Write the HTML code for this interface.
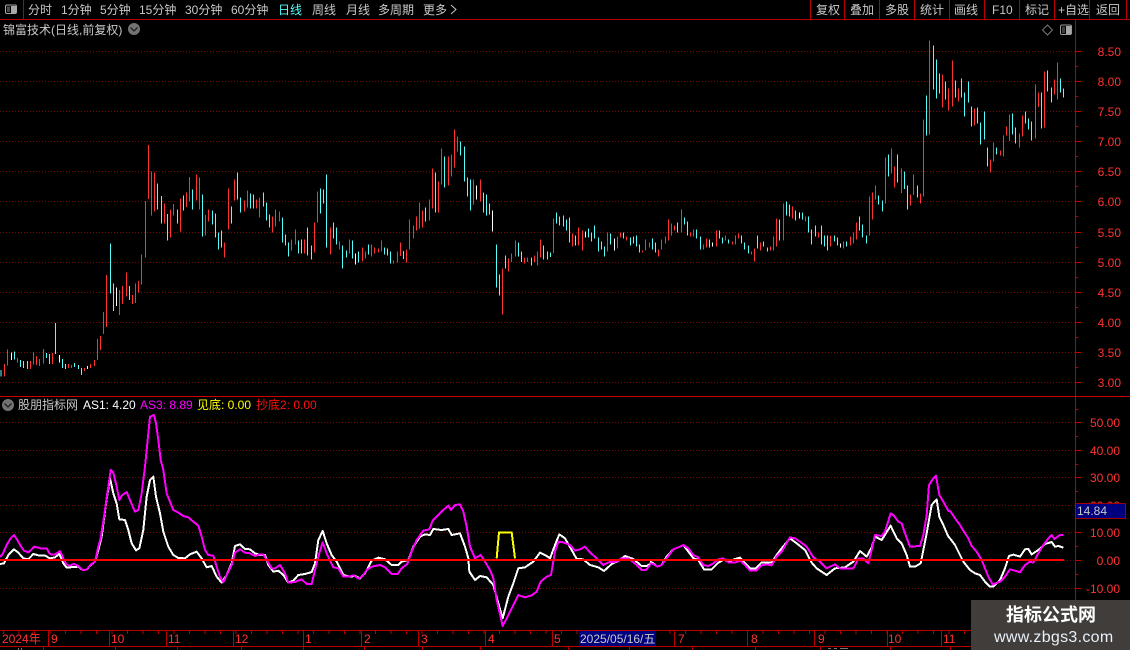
<!DOCTYPE html>
<html><head><meta charset="utf-8"><style>
html,body{margin:0;padding:0;background:#000;width:1130px;height:650px;overflow:hidden}
svg{display:block;position:absolute;left:0;top:0}
text{font-family:"Liberation Sans","WenQuanYi Zen Hei","Noto Sans CJK SC",sans-serif;font-size:12px}
.t text{fill:#c8c8c8}
.a text{fill:#ff3232;text-anchor:end}
.b text{fill:#ff3232}
.r{stroke:#ff3232}.c{stroke:#54fcfc}.w{stroke:#fff}
.bars path{stroke-width:3;fill:none;shape-rendering:crispEdges}
.ln polyline{fill:none;stroke-width:6;shape-rendering:crispEdges;stroke-linejoin:round}
</style></head><body>
<svg width="1130" height="650" viewBox="0 0 1130 650" xmlns="http://www.w3.org/2000/svg">
<rect width="1130" height="650" fill="#000"/>
<!-- grid -->
<g stroke="#780808" stroke-width="1" stroke-dasharray="1 2" shape-rendering="crispEdges">
<path d="M0 51.5H1075M0 81.5H1075M0 111.5H1075M0 141.5H1075M0 171.5H1075M0 201.5H1075M0 232.5H1075M0 262.5H1075M0 292.5H1075M0 322.5H1075M0 352.5H1075M0 382.5H1075"/>
<path d="M0 422.5H1075M0 450.5H1075M0 477.5H1075M0 505.5H1075M0 532.5H1075M1064 560.5H1075M0 588.5H1075"/>
</g>
<!-- frame lines -->
<g stroke="#b80000" stroke-width="1" shape-rendering="crispEdges" fill="none">
<path d="M0 19.5H1130M23.5 0V19M810.5 0V19M844.5 0V19M879.5 0V19M914.5 0V19M949.5 0V19M984.5 0V19M1019.5 0V19M1054.5 0V19M1089.5 0V19M1126.5 0V19"/>
<path d="M1075.5 19V630"/>
<path d="M1075 51.5h6M1075 66.5h3M1075 81.5h6M1075 96.5h3M1075 111.5h6M1075 126.5h3M1075 141.5h6M1075 156.5h3M1075 171.5h6M1075 186.5h3M1075 201.5h6M1075 216.5h3M1075 232.5h6M1075 247.5h3M1075 262.5h6M1075 277.5h3M1075 292.5h6M1075 307.5h3M1075 322.5h6M1075 337.5h3M1075 352.5h6M1075 367.5h3M1075 382.5h6"/>
<path d="M1075 422.5h6M1075 436.5h3M1075 450.5h6M1075 464.5h3M1075 477.5h6M1075 491.5h3M1075 532.5h6M1075 546.5h3M1075 560.5h6M1075 574.5h3M1075 588.5h6M1075 602.5h3M1075 616.5h3M1075 409.5h3"/>
<path d="M0 396.5H1130" stroke="#d00000"/>
<path d="M0 630.5H1130M0 646.5H1130"/>
<path d="M48.5 630V646M109.5 630V646M166.5 630V646M233.5 630V646M303.5 630V646M361.5 630V646M418.5 630V646M485.5 630V646M552.5 630V646M674.5 630V646M747.5 630V646M814.5 630V646M887.5 630V646M941.5 630V646"/>
<path d="M3 632.5H971" stroke-width="3" stroke-dasharray="1 14.5"/>
<path d="M43.5 646V650M115.5 646V650M177.5 646V650M241.5 646V650M303.5 646V650M364.5 646V650M422.5 646V650M480.5 646V650M568.5 646V650M629.5 646V650M692.5 646V650M755.5 646V650M820.5 646V650M890.5 646V650M950.5 646V650"/>
</g>
<!-- top-left icon -->
<rect x="5.5" y="5" width="11" height="8.5" rx="1.5" fill="none" stroke="#a8a8a8"/>
<rect x="11" y="6" width="5" height="7" fill="#a8a8a8"/>
<rect x="7" y="6.5" width="3" height="5.5" fill="#4a4a4a"/>
<!-- toolbar text -->
<g class="t">
<text x="28" y="14">分时</text><text x="61" y="14">1分钟</text><text x="100" y="14">5分钟</text><text x="139" y="14">15分钟</text><text x="185" y="14">30分钟</text><text x="231" y="14">60分钟</text>
<text x="278" y="14" style="fill:#54fcfc">日线</text><text x="312" y="14">周线</text><text x="346" y="14">月线</text><text x="378" y="14">多周期</text><text x="423" y="14">更多</text>
<text x="816" y="14">复权</text><text x="850" y="14">叠加</text><text x="885" y="14">多股</text><text x="920" y="14">统计</text><text x="954" y="14">画线</text><text x="992" y="14">F10</text><text x="1025" y="14">标记</text><text x="1058" y="14">+自选</text><text x="1096" y="14">返回</text>
<text x="3" y="34">锦富技术(日线,前复权)</text>
<text x="18" y="409">股朋指标网</text>
</g>
<path d="M451 5l5 4.5-5 4.5" fill="none" stroke="#c8c8c8"/>
<circle cx="134" cy="29" r="6" fill="#737373"/><path d="M130.5 27.5l3.5 3.5 3.5-3.5" fill="none" stroke="#222" stroke-width="1.3"/>
<circle cx="8" cy="405" r="6" fill="#737373"/><path d="M4.5 403.5l3.5 3.5 3.5-3.5" fill="none" stroke="#222" stroke-width="1.3"/>
<path d="M1047.5 25l5 5-5 5-5-5z" fill="none" stroke="#777"/>
<rect x="1060.5" y="25" width="11" height="9.5" rx="1.5" fill="none" stroke="#999"/><rect x="1066" y="26" width="5" height="8" fill="#a8a8a8"/><rect x="1062" y="26.5" width="3" height="6.5" fill="#3c3c3c"/>
<!-- legend -->
<text x="83" y="409" fill="#fff">AS1: 4.20</text>
<text x="140" y="409" fill="#ff00ff">AS3: 8.89</text>
<text x="197" y="409" fill="#ffff00">见底: 0.00</text>
<text x="256" y="409" fill="#ff1010">抄底2: 0.00</text>
<!-- axis labels -->
<g class="a">
<text x="1121" y="56">8.50</text><text x="1121" y="86">8.00</text><text x="1121" y="116">7.50</text><text x="1121" y="146">7.00</text><text x="1121" y="176">6.50</text><text x="1121" y="206">6.00</text><text x="1121" y="237">5.50</text><text x="1121" y="267">5.00</text><text x="1121" y="297">4.50</text><text x="1121" y="327">4.00</text><text x="1121" y="357">3.50</text><text x="1121" y="387">3.00</text>
<text x="1120" y="427">50.00</text><text x="1120" y="455">40.00</text><text x="1120" y="482">30.00</text><text x="1120" y="510">20.00</text><text x="1120" y="537">10.00</text><text x="1120" y="565">0.00</text><text x="1120" y="593">-10.00</text>
</g>
<rect x="1076" y="503" width="49" height="16" fill="#00007f"/>
<path d="M1076 503.5h50M1076 518.5h50M1125.5 503v16" stroke="#a00000" fill="none" shape-rendering="crispEdges"/>
<text x="1077" y="515" fill="#c8c8c8">14.84</text>
<!-- bottom axis -->
<g class="b">
<text x="2" y="643">2024年</text><text x="51" y="643">9</text><text x="111" y="643">10</text><text x="168" y="643">11</text><text x="235" y="643">12</text><text x="305" y="643">1</text><text x="364" y="643">2</text><text x="421" y="643">3</text><text x="488" y="643">4</text><text x="554" y="643">5</text><text x="678" y="643">7</text><text x="751" y="643">8</text><text x="818" y="643">9</text><text x="888" y="643">10</text><text x="943" y="643">11</text>
</g>
<rect x="579" y="631" width="77" height="15" fill="#00007f"/>
<text x="580" y="643" fill="#c8c8c8">2025/05/16/五</text>
<path d="M18 648h1v2h-1zM21 648h1v2h-1zM828 648h3v1h-3zM834 648h3v1h-3zM840 648h8v1h-8z" fill="#777"/>
<!-- candlesticks -->
<g class="bars">
<g transform="translate(0,300) scale(.33333)">
<path class="r" d="M13 192V230M22 148V197M52 174V188M91 183V207M100 156V193M109 168V195M118 177V198M130 147V190M157 159V192M205 192V204M214 195V204M271 192V204M283 180V198M292 117V180M301 108V150M310 36V102"/>
<path class="c" d="M3 210V230M43 154V178M61 180V201M70 183V204M82 183V207M139 159V174M148 162V192M166 69V162M187 177V204M196 192V207M223 189V201M235 195V207M244 204V225"/>
<path class="w" d="M34 158V180M178 165V188M262 198V207"/>
<path class="r" d="M253 204V213"/>
</g>
<g transform="translate(100,130) scale(.33333)">
<path class="r" d="M19 435V591M58 480V555M68 468V522M79 427V500M97 495V522M106 460V519M115 453V488M124 373V464M136 213V383M145 45V207M154 124V257M163 127V245M193 220V281M211 238V323M220 222V257M241 205V305M259 187V231M268 141V215M289 133V212M298 142V239M316 255V317M325 238V275M373 337V383M385 175V299M403 148V212M433 211V245M442 181V233M469 208V236M478 202V263M517 259V307M526 238V290M538 244V275M574 328V362M586 298V344M613 328V371M643 277V368M652 184V278M691 292V374M718 334V359M748 328V371M787 352V395M796 364V386M814 343V380M823 352V371M835 355V368M844 331V365M880 391V401M892 364V397"/>
<path class="c" d="M31 340V490M40 460V543M88 468V510M172 160V239M184 198V281M202 252V332M232 238V281M250 196V242M277 178V239M307 193V320M337 241V284M346 250V323M355 307V359M364 301V353M394 229V281M412 127V209M421 202V248M451 190V236M460 193V236M490 187V230M499 217V272M508 253V293M547 262V338M556 313V347M565 337V380M595 331V371M604 328V371M622 292V377M634 346V389M661 175V251M670 178V221M679 133V353M700 277V326M709 292V344M727 346V416M739 361V383M757 331V386M775 364V398M805 343V374M853 352V374M862 355V377M871 364V401"/>
<path class="w" d="M49 472V528M766 370V404"/>
</g>
<g transform="translate(400,120) scale(.33333)">
<path class="r" d="M1 367V408M19 388V428M28 298V389M40 316V356M49 289V332M58 247V326M67 271V323M88 238V302M97 145V266M115 184V278M124 85V193M145 109V197M154 103V170M163 28V143M172 49V95M220 178V254M241 178V245M307 445V584M325 415V455M334 400V426M346 361V410M373 412V431M382 412V426M403 406V426M412 394V437M421 358V412M460 295V399M517 340V380M535 322V377M547 331V392M622 337V395M652 349V386M661 337V353M679 349V362M727 391V398M736 358V392M748 367V383M775 388V410M784 358V388M796 349V371M805 298V362M814 310V346M823 316V332M844 268V338M871 337V350M880 328V350"/>
<path class="c" d="M10 393V417M76 262V305M106 157V278M133 109V203M181 64V107M193 79V185M202 172V230M211 178V272M250 217V278M259 223V287M268 250V284M289 373V503M298 463V527M316 406V446M355 367V410M364 394V426M394 412V437M430 376V419M442 394V419M451 397V411M469 277V311M478 289V317M490 286V320M499 298V332M508 292V368M526 346V377M565 325V353M574 337V365M583 316V356M595 352V395M604 364V389M613 379V410M631 340V374M670 337V356M691 352V377M700 349V371M709 346V380M718 373V398M757 355V389M766 367V398M832 307V338M853 292V314M862 304V347M889 328V356"/>
<path class="w" d="M229 196V239M277 271V335M556 334V353M643 355V392"/>
</g>
<g transform="translate(700,130) scale(.33333)">
<path class="r" d="M10 343V358M19 325V353M49 301V350M76 316V332M97 334V344M106 316V344M115 310V326M154 364V374M163 355V395M181 337V362M211 349V362M220 319V362M229 265V350M250 220V332M277 229V266M316 259V275M355 307V323M391 316V350M430 334V356M451 319V347M460 307V341M469 277V329M508 199V317M517 187V268M526 166V209M556 82V220M574 55V131M583 109V173"/>
<path class="c" d="M1 319V359M28 328V352M58 301V326M67 322V341M85 328V341M124 316V341M133 337V359M145 346V371M172 316V355M190 334V350M202 352V365M238 268V332M259 214V257M268 223V259M286 241V272M307 247V269M325 259V307M334 298V344M346 286V320M364 286V344M373 316V350M382 316V362M403 316V335M412 322V347M439 334V350M478 259V301M487 283V323M499 316V341M535 196V224M547 211V245M565 73V140M592 73V158"/>
<path class="w" d="M37 337V350M298 247V266M421 340V353"/>
</g>
<g transform="translate(900,30) scale(.33333)">
<path class="r" d="M4 415V489M31 493V526M40 433V495M61 490V520M70 268V499M88 31V314M127 133V233M145 175V242M157 91V230M175 175V215M223 235V287M271 388V428M280 337V395M301 361V377M310 316V380M319 289V316M328 253V333M358 310V353M367 256V320M406 163V326M415 187V231M433 124V293M463 148V194M472 97V209"/>
<path class="c" d="M13 424V477M22 466V538M52 466V503M79 196V317M100 46V179M109 88V206M118 130V191M136 154V209M166 151V203M184 145V203M193 187V260M205 154V218M214 229V290M232 232V281M241 277V344M253 244V329M262 352V410M289 352V374M337 250V314M346 292V341M376 244V281M385 265V299M394 274V332M424 187V296M442 121V185M454 172V218M481 145V188M490 175V203"/>
</g>
</g>
<!-- lower indicator lines -->
<g class="ln">
<g transform="translate(0,460) scale(.33333)">
<polyline stroke="#fff" points="0,312 12,310 25,285 42,268 55,278 70,295 85,298 100,282 115,286 135,287 150,295 165,292 178,282 190,310 200,323 220,321 235,320 248,330 260,329 272,315 285,305 295,270 305,230 318,130 330,55 340,100 350,130 358,178 375,180 385,210 395,250 408,271 418,265 430,210 440,110 450,60 460,50 468,110 480,160 490,215 505,260 520,285 535,294 555,295 570,283 590,275 605,295 620,322 635,318 650,350 665,368 680,345 695,310 705,258 720,253 735,267 750,268 765,280 780,285 795,285 805,315 820,335 835,332 850,345 865,368 880,362 895,345 915,342 935,336 945,310 955,240 968,213 980,250 995,285 1010,305 1030,345 1050,350"/>
<polyline stroke="#ff00ff" points="0,290 8,282 20,255 32,235 42,225 52,240 62,258 72,272 85,277 95,268 102,260 115,263 125,266 140,265 148,280 155,284 165,283 180,273 190,295 198,312 208,317 222,312 235,318 248,330 260,329 272,314 285,305 295,260 302,235 312,170 322,100 332,30 340,38 350,80 358,120 367,105 380,96 392,125 405,155 415,150 425,100 435,20 443,-60 450,-130 462,-135 468,-110 475,-60 482,0 490,30 500,100 510,125 520,150 535,158 550,168 565,172 580,185 595,197 605,230 615,270 625,285 640,287 650,320 660,350 670,367 680,345 695,315 705,278 720,268 735,278 750,280 765,288 780,283 790,283 800,300 815,325 825,325 840,315 855,340 865,368 885,366 905,358 920,372 935,372 945,330 955,290 968,247 980,280 1000,322 1015,325 1030,350 1050,350"/>
</g>
<g transform="translate(350,490) scale(.33333)">
<polyline stroke="#fff" points="0,260 15,258 30,265 45,250 65,212 85,203 105,208 125,225 145,225 155,215 175,210 190,170 210,140 225,133 240,135 250,117 275,120 295,117 305,135 330,130 345,170 355,205 358,245 375,270 390,258 410,262 430,285 445,340 458,385 475,320 490,280 505,235 525,232 550,215 570,188 590,198 600,205 615,165 628,133 645,145 665,180 680,207 700,208 720,225 745,232 762,243 785,222 805,213 825,198 850,207 875,228 890,228 900,222"/>
<polyline stroke="#ff00ff" points="0,258 12,256 25,266 38,258 50,240 65,230 90,225 105,232 125,252 143,252 155,235 172,222 185,185 200,150 220,122 238,118 248,92 265,75 280,60 295,47 303,60 315,45 330,43 340,65 350,110 360,170 375,205 392,195 405,215 420,240 430,265 440,330 458,408 470,385 490,345 505,315 525,322 545,316 560,305 572,275 590,260 603,255 615,185 625,155 640,157 660,165 675,182 690,178 705,170 720,187 740,205 760,225 775,217 800,215 815,205 835,205 860,225 875,240 888,240 900,225"/>
<polyline stroke="#ffff00" points="440,205 447,127 485,127 495,205"/>
</g>
<g transform="translate(650,460) scale(.33333)">
<polyline stroke="#fff" points="0,305 10,310 22,320 35,315 50,290 70,268 85,262 100,255 115,275 130,295 145,300 162,328 185,328 205,308 220,300 240,303 255,297 270,293 285,310 300,325 318,325 335,307 365,308 380,285 395,265 420,235 440,250 465,270 485,308 500,325 530,345 555,325 585,322 610,305 630,273 650,290 665,262 675,230 695,240 722,197 740,235 755,250 770,285 780,320 795,320 812,310 830,220 845,135 860,118 868,170 880,195 895,230 900,235"/>
<polyline stroke="#ff00ff" points="0,310 10,312 22,320 35,315 50,295 70,268 85,262 100,255 115,265 130,285 145,292 160,315 175,318 190,310 205,298 220,295 235,307 255,308 270,302 285,315 300,332 318,332 335,316 350,313 365,316 380,290 395,275 420,232 435,235 450,245 470,260 490,292 510,305 530,325 555,313 570,325 610,325 625,296 640,296 655,310 665,270 675,225 695,228 705,215 722,160 730,165 745,185 755,190 765,220 780,260 810,258 820,225 830,165 837,75 850,55 858,47 868,105 880,125 895,152 900,155"/>
</g>
<g transform="translate(860,460) scale(.33333)">
<polyline stroke="#fff" points="270,235 285,255 300,285 310,305 330,330 345,340 360,345 375,365 390,380 400,380 420,360 435,325 447,288 460,284 480,290 495,268 505,267 515,283 535,270 555,252 575,246 585,260 595,258 610,263"/>
<polyline stroke="#ff00ff" points="270,152 285,175 300,195 310,212 325,235 335,258 350,275 365,300 375,325 385,350 398,373 420,365 435,350 450,328 465,332 480,337 495,315 510,305 520,308 535,280 550,255 565,235 575,225 583,237 600,225 610,225"/>
</g>
</g>
<rect x="0" y="559" width="1064" height="2" fill="#ff0000"/>
<!-- watermark -->
<rect x="971" y="600" width="159" height="50" fill="#413d3b"/>
<text x="1006" y="621" fill="#fff" style="font-family:'Noto Sans CJK SC','WenQuanYi Zen Hei',sans-serif;font-size:18px;font-weight:700">指标公式网</text>
<text x="994" y="642" fill="#e8f0fa" style="font-size:16px;letter-spacing:.3px">www.zbgs3.com</text>
</svg>
</body></html>
